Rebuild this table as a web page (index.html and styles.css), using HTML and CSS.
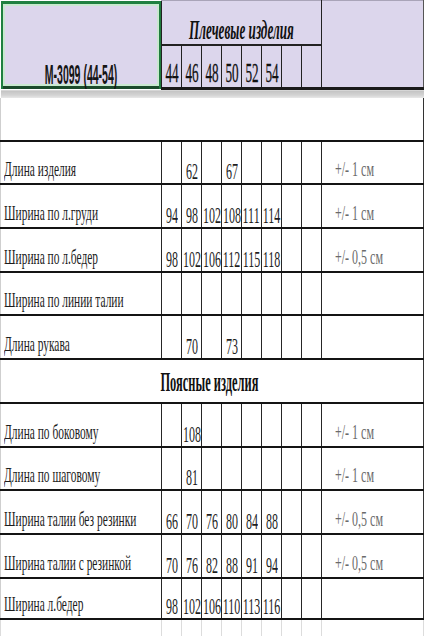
FILE: index.html
```html
<!DOCTYPE html>
<html lang="ru">
<head>
<meta charset="utf-8">
<title>М-3099 (44-54)</title>
<link rel="stylesheet" href="styles.css">
</head>
<body>
<table class="sheet">
  <colgroup>
    <col class="c-label">
    <col class="c-size" span="8">
    <col class="c-tol">
  </colgroup>
  <tr class="h1">
    <td class="model" rowspan="2"><div class="c"><span class="model-t">М-3099 (44-54)</span></div></td>
    <td class="group" colspan="8"><div class="c"><span class="group-t">Плечевые изделия</span></div></td>
    <td class="hblank" rowspan="2"></td>
  </tr>
  <tr class="h2">
    <td class="sz"><div class="c"><span class="sz-t">44</span></div></td>
    <td class="sz"><div class="c"><span class="sz-t">46</span></div></td>
    <td class="sz"><div class="c"><span class="sz-t">48</span></div></td>
    <td class="sz"><div class="c"><span class="sz-t">50</span></div></td>
    <td class="sz"><div class="c"><span class="sz-t">52</span></div></td>
    <td class="sz"><div class="c"><span class="sz-t">54</span></div></td>
    <td class="sz"></td>
    <td class="sz"></td>
  </tr>
  <tr class="band"><td colspan="10"></td></tr>
  <tr class="gap"><td colspan="10"></td></tr>

  <tr class="row r43">
    <td class="lbl"><span class="lbl-t">Длина изделия</span></td>
    <td class="n"></td>
    <td class="n"><div class="c"><span class="n-t">62</span></div></td>
    <td class="n"></td>
    <td class="n"><div class="c"><span class="n-t">67</span></div></td>
    <td class="n"></td><td class="n"></td><td class="n"></td><td class="n"></td>
    <td class="tol"><span class="tol-t">+/- 1 см</span></td>
  </tr>
  <tr class="row r44">
    <td class="lbl"><span class="lbl-t">Ширина по л.груди</span></td>
    <td class="n"><div class="c"><span class="n-t">94</span></div></td>
    <td class="n"><div class="c"><span class="n-t">98</span></div></td>
    <td class="n"><div class="c"><span class="n-t">102</span></div></td>
    <td class="n"><div class="c"><span class="n-t">108</span></div></td>
    <td class="n"><div class="c"><span class="n-t">111</span></div></td>
    <td class="n"><div class="c"><span class="n-t">114</span></div></td>
    <td class="n"></td><td class="n"></td>
    <td class="tol"><span class="tol-t">+/- 1 см</span></td>
  </tr>
  <tr class="row r44">
    <td class="lbl"><span class="lbl-t">Ширина по л.бедер</span></td>
    <td class="n"><div class="c"><span class="n-t">98</span></div></td>
    <td class="n"><div class="c"><span class="n-t">102</span></div></td>
    <td class="n"><div class="c"><span class="n-t">106</span></div></td>
    <td class="n"><div class="c"><span class="n-t">112</span></div></td>
    <td class="n"><div class="c"><span class="n-t">115</span></div></td>
    <td class="n"><div class="c"><span class="n-t">118</span></div></td>
    <td class="n"></td><td class="n"></td>
    <td class="tol"><span class="tol-t">+/- 0,5 см</span></td>
  </tr>
  <tr class="row r43">
    <td class="lbl"><span class="lbl-t">Ширина по линии талии</span></td>
    <td class="n"></td><td class="n"></td><td class="n"></td><td class="n"></td>
    <td class="n"></td><td class="n"></td><td class="n"></td><td class="n"></td>
    <td class="tol"></td>
  </tr>
  <tr class="row r44">
    <td class="lbl"><span class="lbl-t">Длина рукава</span></td>
    <td class="n"></td>
    <td class="n"><div class="c"><span class="n-t">70</span></div></td>
    <td class="n"></td>
    <td class="n"><div class="c"><span class="n-t">73</span></div></td>
    <td class="n"></td><td class="n"></td><td class="n"></td><td class="n"></td>
    <td class="tol"></td>
  </tr>
  <tr class="sect r44">
    <td colspan="10"><div class="c"><span class="sect-t">Поясные изделия</span></div></td>
  </tr>
  <tr class="row r44">
    <td class="lbl"><span class="lbl-t">Длина по боковому</span></td>
    <td class="n"></td>
    <td class="n"><div class="c"><span class="n-t">108</span></div></td>
    <td class="n"></td><td class="n"></td><td class="n"></td>
    <td class="n"></td><td class="n"></td><td class="n"></td>
    <td class="tol"><span class="tol-t">+/- 1 см</span></td>
  </tr>
  <tr class="row r43">
    <td class="lbl"><span class="lbl-t">Длина по шаговому</span></td>
    <td class="n"></td>
    <td class="n"><div class="c"><span class="n-t">81</span></div></td>
    <td class="n"></td><td class="n"></td><td class="n"></td>
    <td class="n"></td><td class="n"></td><td class="n"></td>
    <td class="tol"><span class="tol-t">+/- 1 см</span></td>
  </tr>
  <tr class="row r44">
    <td class="lbl"><span class="lbl-t">Ширина талии без резинки</span></td>
    <td class="n"><div class="c"><span class="n-t">66</span></div></td>
    <td class="n"><div class="c"><span class="n-t">70</span></div></td>
    <td class="n"><div class="c"><span class="n-t">76</span></div></td>
    <td class="n"><div class="c"><span class="n-t">80</span></div></td>
    <td class="n"><div class="c"><span class="n-t">84</span></div></td>
    <td class="n"><div class="c"><span class="n-t">88</span></div></td>
    <td class="n"></td><td class="n"></td>
    <td class="tol"><span class="tol-t">+/- 0,5 см</span></td>
  </tr>
  <tr class="row r44">
    <td class="lbl"><span class="lbl-t">Ширина талии с резинкой</span></td>
    <td class="n"><div class="c"><span class="n-t">70</span></div></td>
    <td class="n"><div class="c"><span class="n-t">76</span></div></td>
    <td class="n"><div class="c"><span class="n-t">82</span></div></td>
    <td class="n"><div class="c"><span class="n-t">88</span></div></td>
    <td class="n"><div class="c"><span class="n-t">91</span></div></td>
    <td class="n"><div class="c"><span class="n-t">94</span></div></td>
    <td class="n"></td><td class="n"></td>
    <td class="tol"><span class="tol-t">+/- 0,5 см</span></td>
  </tr>
  <tr class="row r41">
    <td class="lbl"><span class="lbl-t">Ширина л.бедер</span></td>
    <td class="n"><div class="c"><span class="n-t">98</span></div></td>
    <td class="n"><div class="c"><span class="n-t">102</span></div></td>
    <td class="n"><div class="c"><span class="n-t">106</span></div></td>
    <td class="n"><div class="c"><span class="n-t">110</span></div></td>
    <td class="n"><div class="c"><span class="n-t">113</span></div></td>
    <td class="n"><div class="c"><span class="n-t">116</span></div></td>
    <td class="n"></td><td class="n"></td>
    <td class="tol"></td>
  </tr>
  <tr class="tail">
    <td></td>
    <td></td><td></td><td></td><td></td><td></td><td></td><td></td><td></td>
    <td></td>
  </tr>
</table>
</body>
</html>
```
FILE: styles.css
```css
html, body {
  margin: 0;
  padding: 0;
  background: #ffffff;
}

body {
  width: 424px;
  height: 636px;
  overflow: hidden;
  font-family: "Liberation Serif", "Times New Roman", serif;
  color: #1c1c1c;
}

.sheet {
  width: 424px;
  border-collapse: collapse;
  table-layout: fixed;
}

.c-label { width: 161px; }
.c-size { width: 20px; }
.c-tol { width: auto; }

.sheet td {
  padding: 0;
  overflow: hidden;
  vertical-align: bottom;
  white-space: nowrap;
}

.c {
  display: flex;
  justify-content: center;
}

/* ---------- header ---------- */
.h1 { height: 44px; }
.h2 { height: 44px; }

.model {
  background: #dcd6ec;
  padding-bottom: 11px;
  box-shadow:
    inset 0 3px 0 #1f8040,
    inset 2px 0 0 #1f8040,
    inset -2px 0 0 #1f7a3d,
    inset 0 -3px 0 #1b4a2b,
    inset 0 5px 0 #c9e8cf,
    inset 4px 0 0 #c9e8cf,
    inset -4px 0 0 #c9e8cf,
    inset 0 -5px 0 #c9e8cf;
}

.model-t {
  display: inline-block;
  font-family: "Liberation Sans", Arial, sans-serif;
  font-weight: bold;
  font-size: 27px;
  line-height: 27px;
  color: #151515;
  transform: scaleX(0.39);
}

.group {
  background: #dcd6ec;
  border-top: 1px solid #a9a4b8;
  border-left: 1px solid #222;
  border-right: 1px solid #222;
  border-bottom: 2px solid #222;
  padding-bottom: 8px;
}

.group-t {
  display: inline-block;
  font-weight: bold;
  font-style: italic;
  font-size: 28px;
  line-height: 28px;
  color: #111;
  transform: scaleX(0.47);
}

.hblank {
  background: #dcd6ec;
  border-top: 1px solid #a9a4b8;
  border-left: 1px solid #222;
  border-right: 1px solid #555;
  border-bottom: 3px solid #1a1a1a;
}

.sz {
  background: #dcd6ec;
  border-left: 1px solid #222;
  border-right: 1px solid #222;
  border-bottom: 3px solid #1a1a1a;
  padding-bottom: 8px;
}

.sz-t {
  display: inline-block;
  font-size: 28px;
  line-height: 28px;
  color: #111;
  -webkit-text-stroke: 0.3px #111;
  transform: scaleX(0.47);
}

.band { height: 9px; }
.band td {
  background: linear-gradient(#c2c2c2, #d4d4d4 60%, #ececec);
}

.gap { height: 43px; }
.gap td {
  border-right: 1px solid #333;
  border-left: 1px solid #cfcfcf;
}

/* ---------- body rows ---------- */
.r41 { height: 41px; }
.r43 { height: 43px; }
.r44 { height: 44px; }

.row td {
  border-top: 2px solid #141414;
  border-bottom: 2px solid #141414;
  border-left: 1px solid #262626;
  border-right: 1px solid #262626;
}

.row td.lbl {
  border-left: 1px solid #cfcfcf;
  padding-left: 3px;
  padding-bottom: 3px;
}

.lbl-t {
  display: inline-block;
  font-size: 22px;
  line-height: 22px;
  color: #1c1c1c;
  transform: scaleX(0.52);
  transform-origin: left center;
}

.n { padding-bottom: 2px; }

.n-t {
  display: inline-block;
  font-size: 24px;
  line-height: 24px;
  color: #1e1e1e;
  transform: scaleX(0.5);
}

.row td.tol {
  border-right: 1px solid #333;
  padding-left: 13px;
  padding-bottom: 3px;
}

.tol-t {
  display: inline-block;
  font-size: 20px;
  line-height: 20px;
  color: #6a6a6a;
  transform: scaleX(0.6);
  transform-origin: left center;
}

.sect td {
  border-top: 2px solid #141414;
  border-bottom: 2px solid #141414;
  border-left: 1px solid #cfcfcf;
  border-right: 1px solid #333;
  padding-bottom: 6px;
  padding-right: 6px;
}

.sect-t {
  display: inline-block;
  font-weight: bold;
  font-size: 27px;
  line-height: 27px;
  color: #111;
  transform: scaleX(0.46);
}

.tail { height: 20px; }
.tail td {
  border-left: 1px solid #dcdcdc;
  border-right: 1px solid #dcdcdc;
}
```
